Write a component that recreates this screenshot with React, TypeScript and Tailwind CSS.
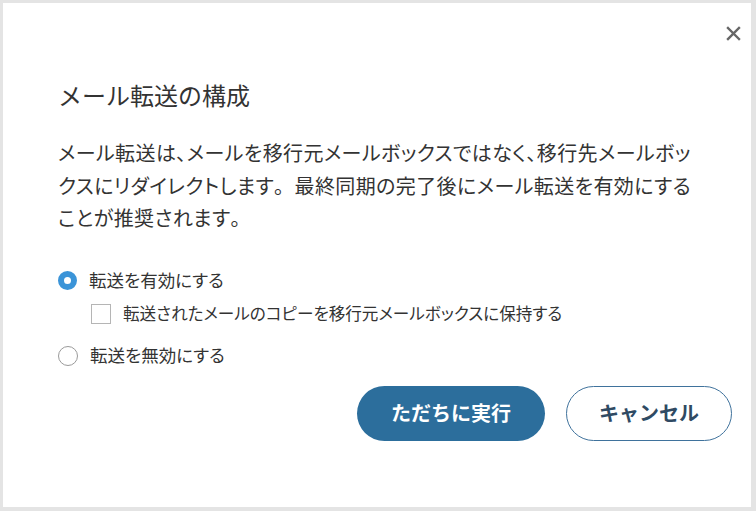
import React from "react";

export default function App() {
  const jp = { fontFamily: '"Noto Sans CJK JP", "Noto Sans", sans-serif' };
  return (
    <div className="w-[756px] h-[511px] bg-[#e4e4e4] pt-[3px] pl-[3px] overflow-hidden" style={jp}>
      <div className="relative w-[748px] h-[504px] bg-white flex flex-col pl-[55px] pr-[40px]">
        <button className="absolute right-[10px] top-[23px] w-[15px] h-[15px] flex items-center justify-center">
          <svg width="15" height="15" viewBox="0 0 15 15">
            <path d="M2 2 L13 13 M13 2 L2 13" stroke="#666" strokeWidth="2.4" strokeLinecap="square" />
          </svg>
        </button>
        <h1 className="mt-[76px] text-[24px] leading-[32px] text-[#333] font-normal">メール転送の構成</h1>
        <div className="[font-feature-settings:'palt']">
          <p className="mt-[26px] text-[20px] leading-[32.5px] tracking-[0.4px] text-[#333]">
            メール転送は、メールを移行元メールボックスではなく、移行先メールボッ
            <br />
            クスにリダイレクトします<span className="[font-feature-settings:normal]">。</span>最終同期の完了後にメール転送を有効にする
            <br />
            ことが推奨されます<span className="[font-feature-settings:normal]">。</span>
          </p>
          <div className="mt-[34px] flex flex-col">
            <label className="flex items-center h-[24px] gap-[12px]">
              <span className="w-[19px] h-[19px] rounded-full border-[6px] border-[#3b94d8] bg-white" />
              <span className="text-[17.5px] text-[#333]">転送を有効にする</span>
            </label>
            <label className="flex items-center h-[24px] gap-[12px] mt-[9px] ml-[33px]">
              <span className="w-[20px] h-[20px] border border-[#b5b5b5] bg-white" />
              <span className="text-[16.6px] text-[#333]">転送されたメールのコピーを移行元メールボックスに保持する</span>
            </label>
            <label className="flex items-center h-[24px] gap-[12px] mt-[18px]">
              <span className="w-[20px] h-[20px] rounded-full border-[1.5px] border-[#9a9a9a] bg-white" />
              <span className="text-[17.5px] text-[#333]">転送を無効にする</span>
            </label>
          </div>
        </div>
        <div className="mt-[18px] flex justify-end gap-[21px]">
          <button className="w-[188px] h-[55px] rounded-full bg-[#2c6e9c] text-white text-[20px] font-bold">ただちに実行</button>
          <button className="w-[166px] h-[55px] rounded-full border-[1.5px] border-[#3f729c] bg-white text-[#2f4a63] text-[20px] font-bold -mr-[21px]">キャンセル</button>
        </div>
      </div>
    </div>
  );
}
